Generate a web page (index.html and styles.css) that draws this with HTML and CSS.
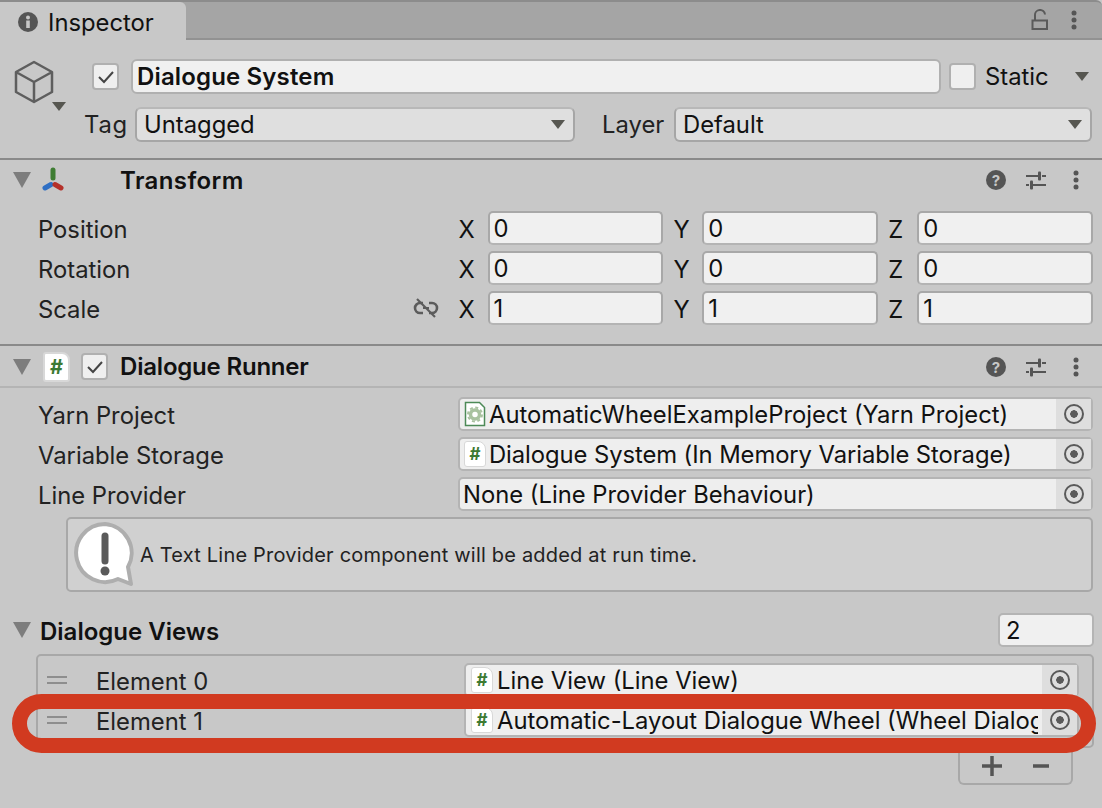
FILE: index.html
```html
<!DOCTYPE html>
<html lang="en">
<head>
    <meta charset="UTF-8">
    <title>Inspector</title>
    <link rel="stylesheet" href="styles.css">
</head>
<body>
    <div class="tabbar">
        <div class="tab">
            <svg class="tab-icon" width="20" height="20" viewBox="0 0 20 20"><circle cx="10" cy="10" r="10" fill="#555"/><rect x="8.2" y="8.5" width="3.6" height="7.5" fill="#c8c8c8"/><circle cx="10" cy="5.5" r="2" fill="#c8c8c8"/></svg>
            <span>Inspector</span>
        </div>
        <div class="tab-tools">
            <svg width="18" height="22" viewBox="0 0 18 22"><path d="M1.500 11.500h14.500v8.500h-14.500zM4 11.500v-5a5 5 0 0 1 10-1" fill="none" stroke="#5a5a5a" stroke-width="2"/></svg>
            <svg class="dots" width="6" height="20" viewBox="0 0 6 20"><circle cx="3" cy="3" r="2.500" fill="#555"/><circle cx="3" cy="10" r="2.500" fill="#555"/><circle cx="3" cy="17" r="2.500" fill="#555"/></svg>
        </div>
    </div>

    <section class="object-head">
        <div class="cube">
            <svg width="42" height="44" viewBox="0 0 42 44"><path d="M20 2L38 12V32L20 42L2 32V12ZM2 12L20 22L38 12M20 22V42" fill="none" stroke="#5e5e5e" stroke-width="2.500" stroke-linejoin="round"/></svg>
            <i class="tri tri-head"></i>
        </div>
        <div class="object-rows">
            <div class="name-row">
                <span class="check"><svg width="18" height="14" viewBox="0 0 18 14"><path d="M2 7l5 5 9-10" fill="none" stroke="#444" stroke-width="2"/></svg></span>
                <span class="name-input">Dialogue System</span>
                <span class="check"></span>
                <span class="static-label">Static</span>
                <i class="tri"></i>
            </div>
            <div class="tag-row">
                <span class="tag-label">Tag</span>
                <span class="dropdown tag-drop">Untagged<i class="tri"></i></span>
                <span class="layer-label">Layer</span>
                <span class="dropdown layer-drop">Default<i class="tri"></i></span>
            </div>
        </div>
    </section>

    <header class="comp-head">
        <i class="foldout"></i>
        <svg class="axis" width="26" height="26" viewBox="0 0 26 26"><path d="M13 3v8" stroke="#3f7d33" stroke-width="5" stroke-linecap="round"/><path d="M5 21l6-3.500" stroke="#2f6fc4" stroke-width="5" stroke-linecap="round"/><path d="M21 21l-6-3.500" stroke="#b5312a" stroke-width="5" stroke-linecap="round"/></svg>
        <h2 class="comp-title transform-title">Transform</h2>
        <div class="comp-tools">
            <svg width="20" height="20" viewBox="0 0 20 20"><circle cx="10" cy="10" r="10" fill="#555"/><text x="10" y="15.500" text-anchor="middle" class="help-q">?</text></svg>
            <svg width="20" height="20" viewBox="0 0 20 20"><path d="M0 6h12M16 6h4M0 15h3M7 15h13" stroke="#555" stroke-width="2"/><rect x="12" y="1.500" width="3" height="9" rx="1" fill="#555"/><rect x="4" y="10.500" width="3" height="9" rx="1" fill="#555"/></svg>
            <svg class="dots" width="6" height="20" viewBox="0 0 6 20"><circle cx="3" cy="3" r="2.500" fill="#555"/><circle cx="3" cy="10" r="2.500" fill="#555"/><circle cx="3" cy="17" r="2.500" fill="#555"/></svg>
        </div>
    </header>
    <section class="transform-body">
        <div class="vec-row">
            <span class="prop-label">Position</span>
            <span class="axis-label">X</span><span class="num">0</span>
            <span class="axis-label">Y</span><span class="num">0</span>
            <span class="axis-label">Z</span><span class="num">0</span>
        </div>
        <div class="vec-row">
            <span class="prop-label">Rotation</span>
            <span class="axis-label">X</span><span class="num">0</span>
            <span class="axis-label">Y</span><span class="num">0</span>
            <span class="axis-label">Z</span><span class="num">0</span>
        </div>
        <div class="vec-row">
            <span class="prop-label">Scale
                <svg class="link-off" width="26" height="20" viewBox="0 0 26 20"><path d="M10 5H7a5 5 0 0 0 0 10h3M16 5h3a5 5 0 0 1 0 10h-3" fill="none" stroke="#5c5c5c" stroke-width="2.600"/><path d="M10 10h6" stroke="#5c5c5c" stroke-width="2"/><path d="M4 1l18 18" stroke="#5c5c5c" stroke-width="2.200"/></svg>
            </span>
            <span class="axis-label">X</span><span class="num">1</span>
            <span class="axis-label">Y</span><span class="num">1</span>
            <span class="axis-label">Z</span><span class="num">1</span>
        </div>
    </section>

    <header class="comp-head runner-head">
        <i class="foldout"></i>
        <span class="script-icon big"><b>#</b></span>
        <span class="check"><svg width="18" height="14" viewBox="0 0 18 14"><path d="M2 7l5 5 9-10" fill="none" stroke="#444" stroke-width="2"/></svg></span>
        <h2 class="comp-title runner-title">Dialogue Runner</h2>
        <div class="comp-tools">
            <svg width="20" height="20" viewBox="0 0 20 20"><circle cx="10" cy="10" r="10" fill="#555"/><text x="10" y="15.500" text-anchor="middle" class="help-q">?</text></svg>
            <svg width="20" height="20" viewBox="0 0 20 20"><path d="M0 6h12M16 6h4M0 15h3M7 15h13" stroke="#555" stroke-width="2"/><rect x="12" y="1.500" width="3" height="9" rx="1" fill="#555"/><rect x="4" y="10.500" width="3" height="9" rx="1" fill="#555"/></svg>
            <svg class="dots" width="6" height="20" viewBox="0 0 6 20"><circle cx="3" cy="3" r="2.500" fill="#555"/><circle cx="3" cy="10" r="2.500" fill="#555"/><circle cx="3" cy="17" r="2.500" fill="#555"/></svg>
        </div>
    </header>
    <section class="runner-body">
        <div class="field-row">
            <span class="prop-label">Yarn Project</span>
            <div class="obj-field">
                <svg class="yarn-icon" width="22" height="26" viewBox="0 0 22 26"><path d="M1.500 1.500h14l5 5v18h-19z" fill="#fff" stroke="#4d8a57" stroke-width="1.500"/><circle cx="11" cy="13.500" r="4.500" fill="none" stroke="#a9c2a0" stroke-width="3.500"/><circle cx="11" cy="13.500" r="7" fill="none" stroke="#a9c2a0" stroke-width="2" stroke-dasharray="3 2.500"/></svg>
                <span class="obj-text">AutomaticWheelExampleProject (Yarn Project)</span>
                <span class="target"><i class="bullseye"></i></span>
            </div>
        </div>
        <div class="field-row">
            <span class="prop-label">Variable Storage</span>
            <div class="obj-field">
                <span class="script-icon"><b>#</b></span>
                <span class="obj-text tight">Dialogue System (In Memory Variable Storage)</span>
                <span class="target"><i class="bullseye"></i></span>
            </div>
        </div>
        <div class="field-row">
            <span class="prop-label">Line Provider</span>
            <div class="obj-field none">
                <span class="obj-text">None (Line Provider Behaviour)</span>
                <span class="target"><i class="bullseye"></i></span>
            </div>
        </div>
        <div class="helpbox">
            <svg width="62" height="66" viewBox="0 0 62 66"><path d="M31 2a29 29 0 1 0 13 55l13 5-3-17a29 29 0 0 0-23-43z" fill="#fff" stroke="#aeaeae" stroke-width="4" stroke-linejoin="round"/><path d="M31 14v25" stroke="#5a5a5a" stroke-width="7" stroke-linecap="round"/><circle cx="31" cy="49" r="4.500" fill="#5a5a5a"/></svg>
            <span>A Text Line Provider component will be added at run time.</span>
        </div>
        <div class="list-head">
            <i class="foldout"></i>
            <h3 class="comp-title">Dialogue Views</h3>
            <span class="num count">2</span>
        </div>
        <div class="list-box">
            <div class="list-row">
                <i class="handle"></i>
                <span class="el-label">Element 0</span>
                <div class="obj-field">
                    <span class="script-icon"><b>#</b></span>
                    <span class="obj-text">Line View (Line View)</span>
                    <span class="target"><i class="bullseye"></i></span>
                </div>
            </div>
            <div class="list-row">
                <i class="handle"></i>
                <span class="el-label">Element 1</span>
                <div class="obj-field">
                    <span class="script-icon"><b>#</b></span>
                    <span class="obj-text">Automatic-Layout Dialogue Wheel (Wheel Dialog</span>
                    <span class="target"><i class="bullseye"></i></span>
                </div>
            </div>
        </div>
        <div class="list-foot">
            <svg width="20" height="20" viewBox="0 0 20 20"><path d="M0 10h20M10 0v20" stroke="#555" stroke-width="3.500"/></svg>
            <svg width="16" height="20" viewBox="0 0 16 20"><path d="M0 10h16" stroke="#555" stroke-width="3.500"/></svg>
        </div>
    </section>

    <div class="callout"></div>
</body>
</html>
```

FILE: styles.css
```css
body {
    margin: 0;
    width: 1102px;
    height: 808px;
    overflow: hidden;
    position: relative;
    background: #c8c8c8;
    font-family: Inter, "Liberation Sans", sans-serif;
    font-size: 23.8px;
    color: #111;
}
i {
    display: block;
}

/* tab strip */
.tabbar {
    height: 40px;
    box-sizing: border-box;
    background: #a5a5a5;
    border-top: 2px solid #8c8c8c;
    border-bottom: 2px solid #929292;
    border-radius: 0 6px 0 0;
    display: flex;
    justify-content: space-between;
}
.tab {
    width: 186px;
    height: 38px;
    box-sizing: border-box;
    background: #c8c8c8;
    border-radius: 0 6px 0 0;
    padding: 2px 0 0 18px;
    display: flex;
    align-items: center;
    gap: 10px;
}
.tab-tools {
    display: flex;
    align-items: center;
    gap: 22px;
    padding-right: 25px;
}

/* triangles */
.tri {
    width: 0;
    height: 0;
    border-left: 7px solid transparent;
    border-right: 7px solid transparent;
    border-top: 9px solid #565650;
}
.foldout {
    width: 0;
    height: 0;
    border-left: 9px solid transparent;
    border-right: 9px solid transparent;
    border-top: 16px solid #7d7d7d;
}

/* game object header */
.object-head {
    height: 120px;
    box-sizing: border-box;
    border-bottom: 2px solid #8a8a8a;
    display: flex;
    padding: 19px 0 0 14px;
}
.cube {
    width: 70px;
    margin-top: 1px;
    position: relative;
}
.tri-head {
    position: absolute;
    left: 38px;
    top: 42px;
}
.object-rows {
    flex: 1;
    padding-right: 10px;
}
.name-row {
    display: flex;
    align-items: center;
    height: 35px;
    padding-left: 9px;
}
.check {
    width: 27px;
    height: 27px;
    box-sizing: border-box;
    background: #efefef;
    border: 2px solid #b0b0b0;
    border-radius: 4px;
    display: flex;
    align-items: center;
    justify-content: center;
}
.name-input {
    width: 810px;
    height: 35px;
    box-sizing: border-box;
    margin: 0 8px 0 12px;
    padding-left: 4px;
    background: #f0f0f0;
    border: 2px solid #b0b0b0;
    border-radius: 6px;
    font-size: 24px;
    font-weight: 600;
    letter-spacing: 0.15px;
    line-height: 31px;
}
.static-label {
    margin-left: 9px;
    width: 90px;
}
.tag-row {
    display: flex;
    align-items: center;
    height: 35px;
    margin-top: 13px;
}
.tag-label {
    width: 52px;
    padding-left: 1px;
    box-sizing: border-box;
    letter-spacing: 0.8px;
    color: #222;
}
.layer-label {
    width: 72px;
    margin-left: 27px;
    color: #222;
}
.dropdown {
    height: 35px;
    box-sizing: border-box;
    background: #dfdfdf;
    border: 2px solid #a6a6a6;
    border-top-color: #b8b8b8;
    border-radius: 6px;
    padding: 0 8px 0 7px;
    line-height: 31px;
    display: flex;
    justify-content: space-between;
    align-items: center;
}
.tag-drop {
    width: 440px;
}
.layer-drop {
    width: 418px;
}

/* component headers */
.comp-head {
    height: 40px;
    display: flex;
    align-items: center;
    padding: 0 23px 0 13px;
}
.comp-title {
    margin: 0;
    font-size: 24px;
    font-weight: 600;
    color: #111;
}
.axis {
    margin: 0 0 0 9px;
}
.transform-title {
    margin-left: 54px;
    letter-spacing: 0.4px;
}
.runner-title {
    letter-spacing: -0.2px;
}
.comp-tools {
    margin-left: auto;
    display: flex;
    align-items: center;
    gap: 20px;
}
.comp-tools .dots {
    margin-left: 7px;
}
.help-q {
    font: 700 15px Inter, sans-serif;
    fill: #c8c8c8;
}
.transform-body {
    height: 146px;
    box-sizing: border-box;
    padding-top: 11px;
    border-bottom: 2px solid #8a8a8a;
}
.vec-row {
    display: flex;
    align-items: center;
    height: 34px;
    margin-bottom: 6px;
    padding-right: 9px;
}
.prop-label {
    width: 459px;
    box-sizing: border-box;
    padding: 2px 0 0 38px;
    color: #222;
    display: flex;
    align-items: center;
    justify-content: space-between;
}
.link-off {
    margin: 0 20px 2px 0;
}
.axis-label {
    width: 29px;
    padding-top: 2px;
}
.num {
    width: 176px;
    height: 34px;
    box-sizing: border-box;
    margin-right: 10px;
    padding-left: 4px;
    background: #f0f0f0;
    border: 2px solid #a8a8a8;
    border-bottom-color: #b4b4b4;
    border-radius: 5px;
    line-height: 32px;
}
.vec-row .num:last-child {
    margin-right: 0;
}

/* dialogue runner */
.runner-head {
    border-bottom: 2px solid #b4b4b4;
    height: 39px;
    padding-top: 1px;
}
.script-icon {
    width: 22px;
    height: 26px;
    box-sizing: border-box;
    flex: none;
    background: #fff;
    border: 1px solid #d8d8d8;
    border-radius: 3px 8px 3px 3px;
    display: flex;
    align-items: center;
    justify-content: center;
    font-size: 17px;
    color: #3c7a32;
}
.script-icon.big {
    width: 27px;
    height: 30px;
    margin: 0 11px 0 12px;
    border-width: 2px;
    font-size: 20px;
}
.runner-head .check {
    margin-right: 12px;
}
.runner-body {
    padding-top: 9px;
}
.field-row {
    display: flex;
    align-items: center;
    height: 34px;
    margin-bottom: 6px;
    padding-right: 9px;
}
.field-row .prop-label {
    width: 458px;
}
.field-row .obj-field {
    padding-left: 4px;
}
.obj-field {
    flex: 1;
    min-width: 0;
    height: 34px;
    box-sizing: border-box;
    background: #eeeeee;
    border: 2px solid #b4b4b4;
    border-radius: 5px;
    display: flex;
    align-items: center;
    padding-left: 5px;
    gap: 3px;
}
.field-row .obj-field.none {
    padding-left: 3px;
}
.list-row .obj-field {
    gap: 4px;
}
.yarn-icon {
    flex: none;
}
.obj-text {
    flex: 1;
    min-width: 0;
    white-space: nowrap;
    overflow: hidden;
    padding-top: 1px;
    line-height: 28px;
}
.obj-text.tight {
    letter-spacing: -0.07px;
}
.target {
    width: 35px;
    height: 30px;
    flex: none;
    background: #dedede;
    display: flex;
    align-items: center;
    justify-content: center;
}
.bullseye {
    width: 20px;
    height: 20px;
    box-sizing: border-box;
    border: 2px solid #5a5a5a;
    border-radius: 50%;
    background: radial-gradient(circle, #5a5a5a 0, #5a5a5a 3.500px, transparent 4px);
}
.helpbox {
    height: 75px;
    box-sizing: border-box;
    margin: 0 9px 0 66px;
    background: #d0d0d0;
    border: 2px solid #a8a8a8;
    border-radius: 5px;
    display: flex;
    align-items: center;
    gap: 4px;
    padding-left: 6px;
    font-size: 20px;
    letter-spacing: 0.2px;
    color: #222;
}
.list-head {
    height: 34px;
    margin-top: 21px;
    display: flex;
    align-items: center;
    padding: 0 8px 0 13px;
}
.list-head .comp-title {
    margin: 2px 0 0 9px;
}
.count {
    margin: 0 0 0 auto;
    width: 96px;
    height: 34px;
    line-height: 31px;
    padding-left: 6px;
    border-color: #b4b4b4;
}
.list-box {
    margin: 7px 8px 0 36px;
    height: 94px;
    box-sizing: border-box;
    border: 2px solid #a8a8a8;
    border-radius: 5px;
    padding-top: 7px;
}
.list-row {
    display: flex;
    align-items: center;
    height: 34px;
    margin-bottom: 6px;
    padding-right: 13px;
}
.handle {
    width: 20px;
    height: 8px;
    box-sizing: border-box;
    margin-left: 9px;
    border-top: 2px solid #8e8e8e;
    border-bottom: 2px solid #8e8e8e;
}
.el-label {
    width: 368px;
    margin-left: 29px;
    padding-top: 2px;
    color: #222;
}
.list-foot {
    width: 115px;
    height: 37px;
    box-sizing: border-box;
    margin: 0 29px 0 auto;
    border: 2px solid #a8a8a8;
    border-top: 0;
    border-radius: 0 0 6px 6px;
    display: flex;
    align-items: center;
    justify-content: center;
    gap: 31px;
}

/* red annotation drawn over the list */
.callout {
    position: absolute;
    left: 12px;
    top: 694px;
    width: 1084px;
    height: 59px;
    box-sizing: border-box;
    border: 15px solid #d13a20;
    border-radius: 30px;
}
```
